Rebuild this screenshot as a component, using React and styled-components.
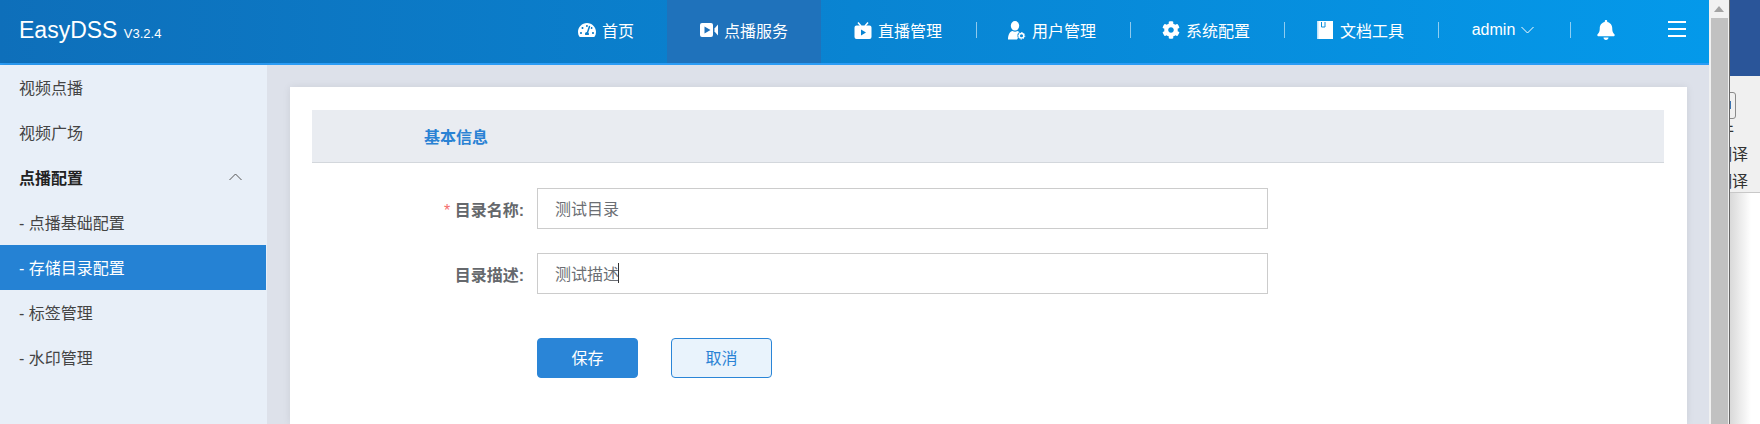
import styled, { createGlobalStyle } from 'styled-components';
import { FaTachometerAlt, FaCog, FaBell } from 'react-icons/fa';

const GlobalStyle = createGlobalStyle`
    html, body {
        margin: 0;
        height: 100%;
        overflow: hidden;
    }
    body {
        font-family: "Liberation Sans", "Noto Sans CJK SC", sans-serif;
        font-size: 16px;
    }
    * {
        box-sizing: border-box;
    }
`

const VideoIcon = () => (
    <svg width="18" height="14" viewBox="0 0 18 14">
        <path fill="#fff" fillRule="evenodd" d="M2 0h9a2 2 0 0 1 2 2v10a2 2 0 0 1-2 2H2a2 2 0 0 1-2-2V2a2 2 0 0 1 2-2zM4.500 3.500v7l6-3.500z" />
        <path fill="#fff" d="M14.500 5.500 18 1.500v11l-3.500-4z" />
    </svg>
)

const TvIcon = () => (
    <svg width="17" height="17" viewBox="0 0 17 17">
        <path fill="#fff" fillRule="evenodd" d="M2 3.500h13a2 2 0 0 1 2 2V15a2 2 0 0 1-2 2H2a2 2 0 0 1-2-2V5.500a2 2 0 0 1 2-2zM6.500 7.500v6l5-3z" />
        <path fill="none" stroke="#fff" strokeWidth="1.500" d="M3.500.5 6.500 4M13.500.5 10.500 4" />
    </svg>
)

const UserGearIcon = () => (
    <svg width="18" height="19" viewBox="0 0 18 19">
        <ellipse cx="7" cy="4.800" rx="4.200" ry="4.800" fill="#fff" />
        <path fill="#fff" d="M0 18.500c0-5 2-8 4.500-8.500 1.500 1 3.500 1 5 0 1.500.4 2.500 1.300 3.300 2.500L9 18.500z" />
        <circle cx="13.500" cy="14.800" r="4.200" fill="#0788d8" />
        <circle cx="13.500" cy="14.800" r="2.300" fill="none" stroke="#fff" strokeWidth="1.500" />
        <path fill="none" stroke="#fff" strokeWidth="1" strokeDasharray="1.200 1.200" d="M13.500 11.500a3.300 3.300 0 1 1-.01 0z" />
    </svg>
)

const BookIcon = () => (
    <svg width="16" height="18" viewBox="0 0 16 18">
        <path fill="#fff" d="M1 0h15v18H1z" />
        <path fill="#bfe3fa" d="M0 0h1.500v18H0z" />
        <path fill="none" stroke="#0b8edc" strokeWidth="1" d="M4.500 1v5h3.500V1" />
    </svg>
)

const Chevron = ({ up, color }) => (
    <svg width="13" height="8" viewBox="0 0 13 8">
        <path fill="none" stroke={color} strokeWidth="1" d={up ? 'M.5 7 6.500 1l6 6' : 'M.5 1l6 6 6-6'} />
    </svg>
)

const navItems = [
    { label: '首页', icon: <FaTachometerAlt size={18} /> },
    { label: '点播服务', icon: <VideoIcon />, active: true },
    { label: '直播管理', icon: <TvIcon />, divider: true },
    { label: '用户管理', icon: <UserGearIcon />, divider: true },
    { label: '系统配置', icon: <FaCog size={18} />, divider: true },
    { label: '文档工具', icon: <BookIcon />, divider: true },
]

const sideItems = [
    { label: '视频点播' },
    { label: '视频广场' },
    { label: '点播配置', group: true },
    { label: '- 点播基础配置' },
    { label: '- 存储目录配置', active: true },
    { label: '- 标签管理' },
    { label: '- 水印管理' },
]

const App = () => {
    return (
        <Screen>
            <GlobalStyle />
            <Main>
                <Header>
                    <Logo>EasyDSS <small>V3.2.4</small></Logo>
                    <NavList>
                        {navItems.map((item) => (
                            <NavItem key={item.label} $active={item.active} $divider={item.divider}>
                                {item.icon}
                                <span>{item.label}</span>
                            </NavItem>
                        ))}
                        <UserItem $divider>
                            admin
                            <Chevron color="#fff" />
                        </UserItem>
                        <BellItem><FaBell size={20} /></BellItem>
                        <MenuItem>
                            <MenuBar />
                            <MenuBar />
                            <MenuBar />
                        </MenuItem>
                    </NavList>
                </Header>
                <Body>
                    <Sidebar>
                        {sideItems.map((item) => (
                            <SideItem key={item.label} $active={item.active} $group={item.group}>
                                {item.label}
                                {item.group && <Chevron up color="#555" />}
                            </SideItem>
                        ))}
                    </Sidebar>
                    <Content>
                        <Card>
                            <SectionTitle>基本信息</SectionTitle>
                            <Form>
                                <Label><Star>*</Star> 目录名称:</Label>
                                <InputWrap>
                                    <Input defaultValue="测试目录" />
                                </InputWrap>
                                <Label>目录描述:</Label>
                                <InputWrap>
                                    <Input defaultValue="测试描述" />
                                    <Caret />
                                </InputWrap>
                            </Form>
                            <Actions>
                                <Button $primary>保存</Button>
                                <Button>取消</Button>
                            </Actions>
                        </Card>
                    </Content>
                </Body>
            </Main>
            <Scrollbar>
                <ScrollArrow />
                <ScrollThumb />
            </Scrollbar>
            <OtherWindow>
                <OtherTop />
                <OtherToolbar>
                    <OtherIcon />
                    <OtherFile>件</OtherFile>
                    <OtherText>翻译</OtherText>
                    <OtherText>翻译</OtherText>
                </OtherToolbar>
                <OtherRest />
            </OtherWindow>
        </Screen>
    )
}

const Screen = styled.div`
    display: flex;
    width: 1760px;
    height: 424px;
    overflow: hidden;
`

const Main = styled.div`
    display: flex;
    flex-direction: column;
    width: 1709px;
    flex-shrink: 0;
`

const Header = styled.header`
    display: flex;
    justify-content: space-between;
    align-items: stretch;
    height: 65px;
    flex-shrink: 0;
    color: white;
    background: linear-gradient(90deg, #0e6fba, #0499ea);
    border-bottom: 2px solid #2b9cf5;
`

const Logo = styled.div`
    padding-left: 19px;
    font-size: 23px;
    line-height: 61px;
    small {
        font-size: 13px;
    }
`

const NavList = styled.nav`
    display: flex;
`

const NavItem = styled.div`
    position: relative;
    display: flex;
    align-items: center;
    justify-content: center;
    gap: 6px;
    padding: 0 33px 3px;
    height: 63px;
    background-color: ${(p) => (p.$active ? '#1f72bb' : 'transparent')};
    svg {
        width: 18px;
        flex-shrink: 0;
    }
    &::after {
        content: '';
        display: ${(p) => (p.$divider ? 'block' : 'none')};
        position: absolute;
        right: -2px;
        top: 22px;
        width: 1px;
        height: 16px;
        background-color: rgba(255, 255, 255, 0.55);
    }
`

const UserItem = styled(NavItem)`
    width: 132px;
    padding: 0 0 3px;
    svg {
        width: 13px;
    }
`

const BellItem = styled(NavItem)`
    width: 72px;
    padding: 0 0 3px 2px;
`

const MenuItem = styled.div`
    display: flex;
    flex-direction: column;
    justify-content: center;
    align-items: center;
    gap: 5px;
    width: 68px;
    height: 63px;
    padding: 0 0 5px 3px;
`

const MenuBar = styled.span`
    width: 18px;
    height: 2px;
    background-color: white;
`

const Body = styled.div`
    display: flex;
    flex: 1;
    min-height: 0;
`

const Sidebar = styled.aside`
    width: 267px;
    flex-shrink: 0;
    padding-right: 1px;
    background-color: #e8eff8;
    box-shadow: 2px 0 4px rgba(0, 0, 0, 0.1);
`

const SideItem = styled.div`
    display: flex;
    justify-content: space-between;
    align-items: center;
    height: 45px;
    padding: 0 24px 2px 19px;
    font-size: 16px;
    font-weight: ${(p) => (p.$group ? 700 : 400)};
    color: ${(p) => (p.$active ? '#fff' : p.$group ? '#222' : '#444')};
    background-color: ${(p) => (p.$active ? '#2582d4' : 'transparent')};
`

const Content = styled.main`
    flex: 1;
    min-width: 0;
    padding: 22px 22px 0 23px;
    background-color: #dde1ea;
`

const Card = styled.section`
    height: 100%;
    padding: 23px 23px 0 22px;
    background-color: white;
    box-shadow: 0 0 8px rgba(0, 0, 0, 0.08);
`

const SectionTitle = styled.h2`
    margin: 0;
    height: 53px;
    padding-left: 112px;
    font-size: 16px;
    font-weight: 700;
    line-height: 55px;
    color: #2a82d4;
    background-color: #e9ecf1;
    border-bottom: 1px solid #d3d7dc;
`

const Form = styled.div`
    display: grid;
    grid-template-columns: 212px 731px;
    column-gap: 13px;
    row-gap: 24px;
    align-items: center;
    margin-top: 25px;
`

const Label = styled.label`
    text-align: right;
    font-size: 16px;
    font-weight: 700;
    color: #65686c;
`

const Star = styled.span`
    font-weight: 400;
    color: #f56c6c;
`

const InputWrap = styled.div`
    position: relative;
`

const Input = styled.input`
    display: block;
    width: 100%;
    height: 41px;
    padding: 0 17px 2px;
    font: inherit;
    font-size: 16px;
    color: #6b6e73;
    background-color: white;
    border: 1px solid #ccc;
    outline: none;
`

const Caret = styled.span`
    position: absolute;
    left: 81px;
    top: 10px;
    width: 1px;
    height: 20px;
    background-color: #333;
`

const Actions = styled.div`
    display: flex;
    gap: 33px;
    margin-top: 44px;
    padding-left: 225px;
`

const Button = styled.button`
    width: 101px;
    height: 40px;
    padding: 0 0 2px;
    font: inherit;
    font-size: 16px;
    color: ${(p) => (p.$primary ? '#fff' : '#2a82d4')};
    background-color: ${(p) => (p.$primary ? '#2a85d7' : '#e9f3fc')};
    border: 1px solid #2a85d7;
    border-radius: 4px;
`

const Scrollbar = styled.div`
    display: flex;
    flex-direction: column;
    align-items: center;
    width: 21px;
    flex-shrink: 0;
    background-color: #f1f1f1;
    border-right: 1px solid #666;
`

const ScrollArrow = styled.div`
    flex-shrink: 0;
    width: 0;
    height: 0;
    margin: 6px 0 6px;
    border-left: 5px solid transparent;
    border-right: 5px solid transparent;
    border-bottom: 6px solid #a3a3a3;
`

const ScrollThumb = styled.div`
    flex: 1;
    width: 17px;
    background-color: #c1c1c1;
`

const OtherWindow = styled.div`
    display: flex;
    flex-direction: column;
    flex: 1;
    min-width: 0;
    overflow: hidden;
`

const OtherTop = styled.div`
    height: 76px;
    flex-shrink: 0;
    background-color: #2a5599;
`

const OtherToolbar = styled.div`
    display: flex;
    flex-direction: column;
    align-items: flex-end;
    height: 117px;
    flex-shrink: 0;
    overflow: hidden;
    font-family: "Noto Sans CJK SC", sans-serif;
    color: #333;
    background-color: #f0f0f0;
    border-bottom: 1px solid #c8c8c8;
`

const OtherIcon = styled.div`
    flex-shrink: 0;
    width: 24px;
    height: 27px;
    margin: 16px 24px 0 0;
    border: 1px solid #8a8a8a;
    border-radius: 3px;
    background: linear-gradient(#3b72b0, #3b72b0) 14px 8px / 4px 8px no-repeat;
`

const OtherFile = styled.div`
    flex-shrink: 0;
    margin-right: 26px;
    font-size: 16px;
    line-height: 21px;
`

const OtherText = styled.div`
    flex-shrink: 0;
    margin-right: 12px;
    font-size: 16px;
    line-height: 27px;
    white-space: nowrap;
`

const OtherRest = styled.div`
    flex: 1;
    background: linear-gradient(90deg, #d9d9d9, #ffffff 70%);
`

export default App;
